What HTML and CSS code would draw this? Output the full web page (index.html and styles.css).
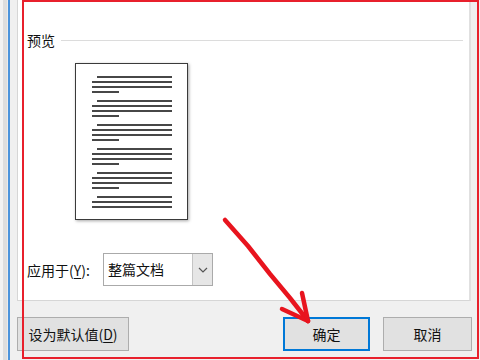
FILE: index.html
```html
<!DOCTYPE html>
<html lang="zh-CN">
<head>
<meta charset="utf-8">
<title>页面设置 - 预览</title>
<link rel="stylesheet" href="styles.css">
</head>
<body>
<div class="frame">
  <div class="edge"></div>
  <div class="accent"></div>
  <div class="dialog">
    <div class="panel">
      <div class="section-head">
        <span class="section-title">预览</span>
        <span class="section-rule"></span>
      </div>
      <div class="page">
        <svg class="page-lines" width="111" height="155" viewBox="0 0 111 155">
          <g stroke="#474747" stroke-width="2">
            <path d="M21 13H96M16 18H96M16 23H96M16 28H43"/>
            <path d="M21 37H96M16 42H96M16 47H96M16 52H43"/>
            <path d="M21 61H96M16 66H96M16 71H96M16 76H43"/>
            <path d="M21 85H96M16 90H96M16 95H96M16 100H43"/>
            <path d="M21 109H96M16 114H96M16 119H96M16 124H43"/>
            <path d="M21 133H96M16 138H96M16 143H96"/>
          </g>
        </svg>
      </div>
      <div class="apply-row">
        <span class="apply-label">应用于(<u>Y</u>):</span>
        <div class="combo">
          <span class="combo-value">整篇文档</span>
          <span class="combo-btn">
            <svg width="10" height="6" viewBox="0 0 10 6"><path d="M1 1L5 5L9 1" fill="none" stroke="#555" stroke-width="1.2"/></svg>
          </span>
        </div>
      </div>
    </div>
    <div class="button-row">
      <button class="btn btn-default">设为默认值(<u>D</u>)</button>
      <span class="spacer"></span>
      <button class="btn btn-ok">确定</button>
      <button class="btn btn-cancel">取消</button>
    </div>
  </div>
</div>
<div class="annot-box"></div>
<svg class="annot-arrow" width="480" height="360" viewBox="0 0 480 360">
  <g fill="none" stroke="#e8141e" stroke-width="4.5" stroke-linecap="round" stroke-linejoin="round">
    <path d="M225 220 L248 246 L270 274 L290 298 L308 321"/>
    <path d="M282 309 L295 315 L308 321"/>
    <path d="M302 293 L305 307 L308 321"/>
  </g>
</svg>
</body>
</html>
```

FILE: styles.css
```css
html, body {
  margin: 0;
  padding: 0;
}
body {
  width: 480px;
  height: 360px;
  overflow: hidden;
  position: relative;
  background: #f0f0f0;
  font-family: "Microsoft YaHei UI", "Noto Sans CJK SC", "Noto Sans", sans-serif;
  font-size: 14px;
  color: #111;
}
.frame {
  display: flex;
  height: 360px;
}
.edge {
  width: 8px;
  background: linear-gradient(to right, #f3f3f3 0, #f3f3f3 3px, #dedede 3px, #dedede 7px, #ececec 7px);
}
.accent {
  width: 2px;
  background: #4c94dc;
}
.dialog {
  flex: 1;
  display: flex;
  flex-direction: column;
  padding: 0 8px 0 7px;
}
.panel {
  height: 301px;
  box-sizing: border-box;
  background: #fff;
  border: 1px solid #d6d6d6;
  border-top: none;
  margin-right: 1px;
  border-right: 2px solid #e0e0e0;
  padding: 32px 0 0 9px;
  display: flex;
  flex-direction: column;
}
.section-head {
  display: flex;
  align-items: center;
  height: 16px;
}
.section-title {
  line-height: 16px;
}
.section-rule {
  flex: 1;
  height: 1px;
  background: #dcdcdc;
  margin: 0 6px 0 6px;
}
.page {
  margin: 15px 0 0 48px;
  width: 113px;
  height: 157px;
  box-sizing: border-box;
  border: 1px solid #3a3a3a;
  background: #fff;
  box-shadow: 1px 1px 3px rgba(0, 0, 0, 0.35);
}
.page-lines {
  display: block;
}
.apply-row {
  margin-top: 33px;
  display: flex;
  align-items: center;
}
.apply-label {
  width: 76px;
  line-height: 16px;
}
.apply-label u {
  text-underline-offset: 2px;
}
.combo {
  width: 110px;
  height: 33px;
  box-sizing: border-box;
  border: 1px solid #aaaaaa;
  display: flex;
  background: #fff;
}
.combo-value {
  flex: 1;
  padding-left: 4px;
  line-height: 31px;
}
.combo-btn {
  width: 19px;
  background: #e6e6e6;
  border-left: 1px solid #c4c4c4;
  display: flex;
  align-items: center;
  justify-content: center;
}
.button-row {
  margin-top: 16px;
  display: flex;
  height: 34px;
}
.spacer {
  flex: 1;
}
.btn {
  font: inherit;
  color: #111;
  background: #e1e1e1;
  border: 1px solid #adadad;
  height: 34px;
  padding: 0;
  box-sizing: border-box;
}
.btn u {
  text-underline-offset: 2px;
}
.btn-default {
  width: 112px;
}
.btn-ok {
  width: 87px;
  border: 2px solid #0078d7;
  margin-right: 13px;
}
.btn-cancel {
  width: 89px;
}
.annot-box {
  position: absolute;
  left: 22px;
  top: 0;
  width: 457px;
  height: 359px;
  box-sizing: border-box;
  border: 2px solid #e8202c;
  pointer-events: none;
}
.annot-arrow {
  position: absolute;
  left: 0;
  top: 0;
  pointer-events: none;
}
```
